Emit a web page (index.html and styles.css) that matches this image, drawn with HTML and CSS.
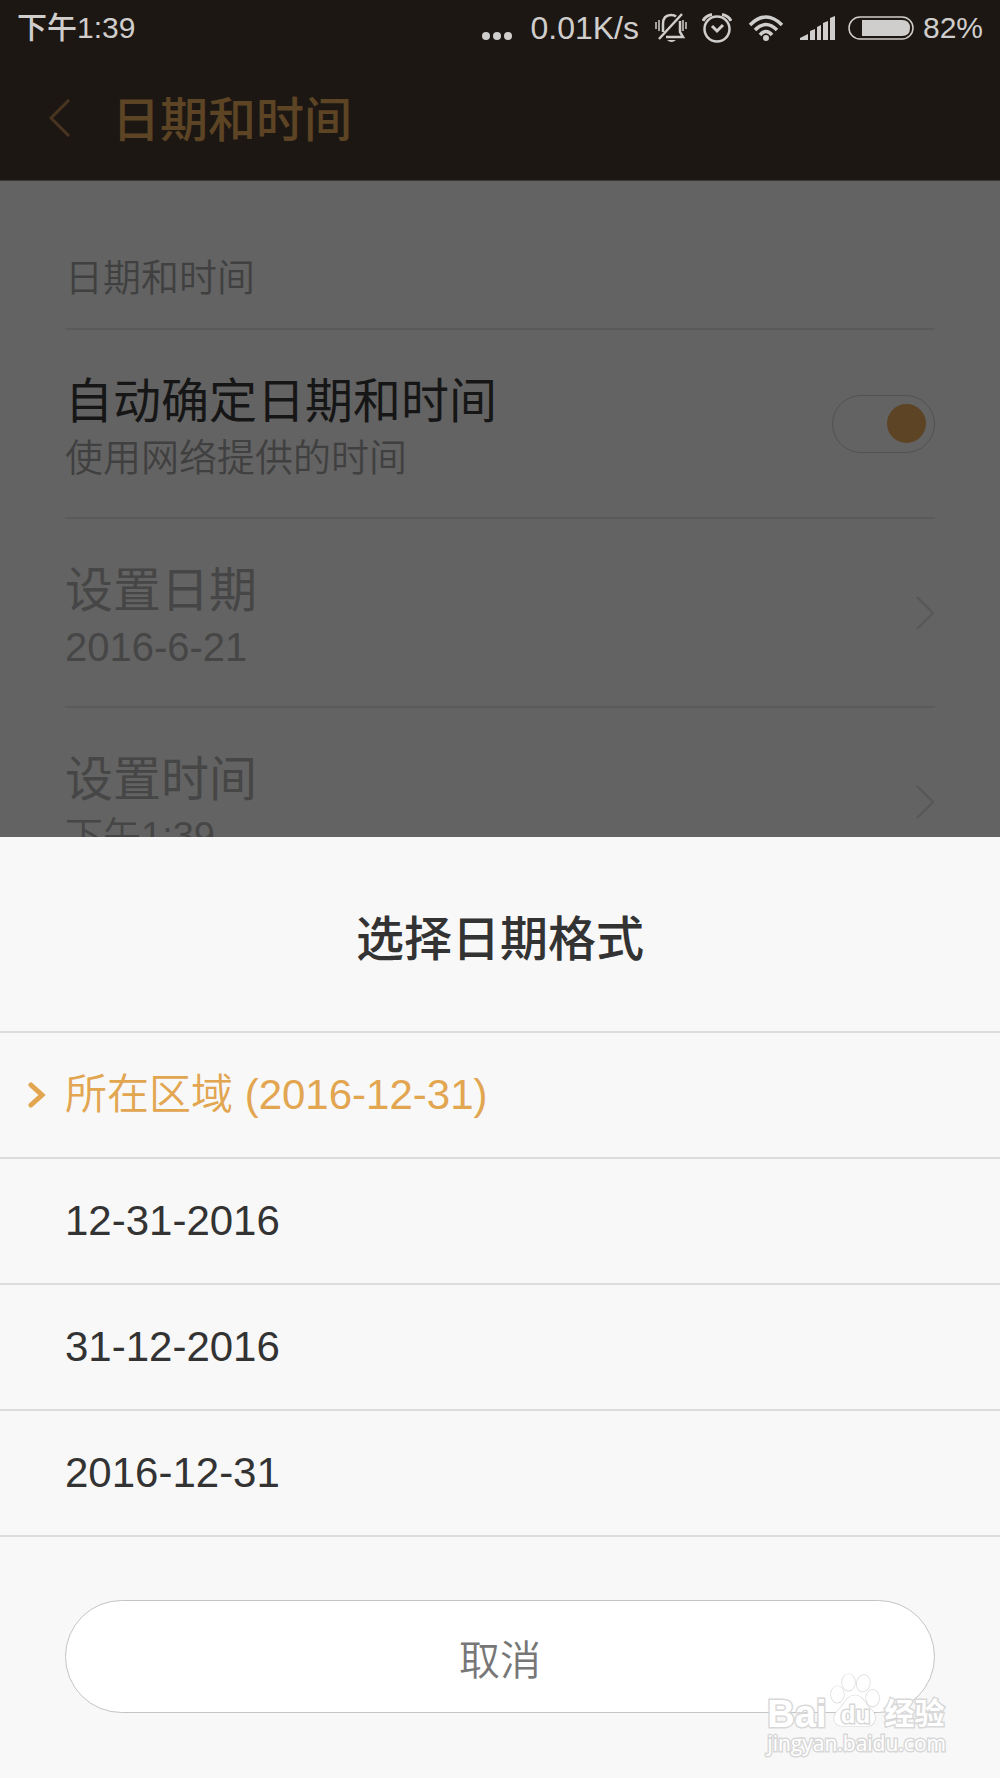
FILE: index.html
```html
<!DOCTYPE html>
<html lang="zh-CN">
<head>
  <meta charset="UTF-8">
  <meta name="viewport" content="width=device-width, initial-scale=1.0">
  <title>日期和时间</title>
  <link rel="stylesheet" href="styles.css">
</head>
<body>

  <header class="top">
    <div class="status-bar">
      <span class="clock">下午1:39</span>
      <svg class="dots" width="30" height="26" viewBox="0 0 30 26"><g fill="#d0cecc"><circle cx="4" cy="21" r="4"/><circle cx="15" cy="21" r="4"/><circle cx="26" cy="21" r="4"/></g></svg>
      <span class="speed">0.01K/s</span>
      <svg class="bell" width="32" height="30" viewBox="0 0 32 30" fill="none" stroke="#d0cecc" stroke-width="2.500">
        <path d="M8 19V11C8 5 11 2 16 2C18 2 20 2.500 21 3.500M25 8V19L28 24H11M4 26L27 1"/>
        <path d="M1 9V16M4 7V18M28 7V18M31 9V16" stroke-width="1.500"/>
        <path d="M12 27H21Q16.500 31 12 27Z" fill="#d0cecc" stroke="none"/>
      </svg>
      <svg class="alarm" width="30" height="30" viewBox="0 0 30 30" fill="none" stroke="#d0cecc" stroke-width="2.500">
        <circle cx="15" cy="16" r="12.500"/>
        <path d="M10 13L15 18L21 12" stroke-width="3"/>
        <path d="M1 8Q3 3 10 1.500M20 1.500Q27 3 29 8" stroke-width="3"/>
      </svg>
      <svg class="wifi" width="36" height="28" viewBox="0 0 36 28" fill="none" stroke="#d0cecc" stroke-width="3.500">
        <path d="M2 11Q18 -5 34 11M7 16Q18 5 29 16M12 21Q18 14 24 21"/>
        <circle cx="18" cy="24" r="3" fill="#d0cecc" stroke="none"/>
      </svg>
      <svg class="signal" width="35" height="24" viewBox="0 0 35 24" fill="#d0cecc">
        <path d="M0 24V22L8 18V24ZM10 24V15L15 13V24ZM17 24V11L21 9V24ZM23 24V7L28 5V24ZM30 24V2L35 0V24Z"/>
      </svg>
      <svg class="battery" width="66" height="24" viewBox="0 0 66 24">
        <rect x="1" y="1" width="64" height="22" rx="11" fill="none" stroke="#d0cecc" stroke-width="1.500"/>
        <path d="M14 4H54Q62 4 62 12Q62 20 54 20H14Z" fill="#d0cecc"/>
      </svg>
      <span class="percent">82%</span>
    </div>
    <div class="title-bar">
      <a href="#" class="back" aria-label="返回">
        <svg width="22" height="38" viewBox="0 0 22 38" fill="none" stroke="#49341f" stroke-width="3"><path d="M20 1L2 19L20 37"/></svg>
      </a>
      <h1>日期和时间</h1>
    </div>
  </header>

  <main class="settings">
    <h2>日期和时间</h2>
    <div class="row">
      <label class="row-text" for="auto">
        <span class="name">自动确定日期和时间</span>
        <span class="value">使用网络提供的时间</span>
      </label>
      <input type="checkbox" id="auto" class="switch" checked>
    </div>
    <div class="row disabled">
      <div class="row-text">
        <span class="name">设置日期</span>
        <span class="value date">2016-6-21</span>
      </div>
      <svg width="19" height="34" viewBox="0 0 19 34" fill="none" stroke="#575757" stroke-width="2"><path d="M1 1L17 17L1 33"/></svg>
    </div>
    <div class="row disabled">
      <div class="row-text">
        <span class="name">设置时间</span>
        <span class="value">下午1:39</span>
      </div>
      <svg width="19" height="34" viewBox="0 0 19 34" fill="none" stroke="#575757" stroke-width="2"><path d="M1 1L17 17L1 33"/></svg>
    </div>
  </main>

  <form class="sheet" role="dialog" aria-labelledby="sheetTitle">
    <h2 id="sheetTitle">选择日期格式</h2>
    <label class="option">
      <input type="radio" name="formato" checked>
      <svg class="mark" width="18" height="26" viewBox="0 0 18 26" fill="none" stroke="#e2a550" stroke-width="5" stroke-linecap="round"><path d="M3 3L14 13L3 23"/></svg>
      <span>所在区域 (2016-12-31)</span>
    </label>
    <label class="option">
      <input type="radio" name="formato">
      <span>12-31-2016</span>
    </label>
    <label class="option">
      <input type="radio" name="formato">
      <span>31-12-2016</span>
    </label>
    <label class="option">
      <input type="radio" name="formato">
      <span>2016-12-31</span>
    </label>
    <button type="button" class="cancel">取消</button>

    <div class="watermark">
      <div class="brand">
        <span class="bai">Bai</span>
        <span class="paw">
          <svg width="50" height="58" viewBox="0 0 54 58" fill="#fff" stroke="#d8d8d8" stroke-width="1.500">
            <ellipse cx="8" cy="23" rx="7" ry="9"/>
            <ellipse cx="20" cy="10" rx="7" ry="9"/>
            <ellipse cx="36" cy="11" rx="7" ry="9" transform="rotate(12 36 11)"/>
            <ellipse cx="46" cy="27" rx="7" ry="9"/>
            <path d="M27 24C36 24 38 34 44 39C52 46 49 57 40 57H14C3 57 2 46 9 40C16 34 18 24 27 24Z"/>
          </svg>
          <span class="du">du</span>
        </span>
        <span class="jing">经验</span>
      </div>
      <div class="site">jingyan.baidu.com</div>
    </div>
  </form>

</body>
</html>
```
FILE: styles.css
```css
* {
  box-sizing: border-box;
}
body {
  margin: 0;
  height: 100vh;
  display: flex;
  flex-direction: column;
  background: #636363;
  font-family: "Liberation Sans", "Noto Sans CJK SC", sans-serif;
  font-weight: 350;
}
h1, h2 {
  margin: 0;
  font-size: 48px;
  line-height: 60px;
  font-weight: 500;
}

/* Barra superior */
.top {
  flex: none;
  height: 181px;
  background: #1d1713;
  border-bottom: 1px solid #3c3835;
}
.status-bar {
  display: flex;
  align-items: center;
  height: 56px;
  padding: 0 17px;
  color: #d0cecc;
  font-size: 30px;
  font-weight: 500;
  line-height: 34px;
}
.clock {
  margin-right: auto;
}
.speed {
  margin: 0 16px 0 18px;
  font-size: 32px;
}
.alarm {
  margin: 0 16px 0 15px;
}
.signal {
  margin: 0 13px 0 16px;
}
.percent {
  margin-left: 9px;
}
.title-bar {
  display: flex;
  align-items: center;
  gap: 41px;
  height: 124px;
  padding: 0 49px;
}
.title-bar h1 {
  padding-top: 6px;
  color: #5c4424;
}
.back {
  display: flex;
}

/* Lista de ajustes */
.settings {
  flex: 1 1 0;
  min-height: 0;
  overflow: hidden;
  padding: 0 65px;
  color: #404040;
}
.settings h2 {
  height: 147px;
  padding-top: 67px;
  font-size: 38px;
  font-weight: 350;
}
.row {
  display: flex;
  align-items: center;
  justify-content: space-between;
  height: 189px;
  border-top: 2px solid #5a5a5a;
}
.row-text {
  padding-top: 8px;
}
.row-text span {
  display: block;
}
.name {
  font-size: 48px;
  line-height: 60px;
  font-weight: 400;
  color: #161616;
}
.value {
  font-size: 38px;
  line-height: 52px;
}
.date {
  font-size: 40px;
}
.disabled {
  color: #464646;
}
.disabled .name {
  color: #464646;
}
.switch {
  appearance: none;
  display: flex;
  align-items: center;
  justify-content: flex-end;
  width: 103px;
  height: 58px;
  margin: 0;
  padding-right: 8px;
  border: 1px solid #525252;
  border-radius: 29px;
}
.switch::before {
  content: "";
  width: 39px;
  height: 39px;
  border-radius: 50%;
  background: #5c4424;
}

/* Panel inferior */
.sheet {
  position: relative;
  flex: none;
  padding-bottom: 65px;
  background: #f8f8f8;
  color: #333;
}
.sheet h2 {
  height: 196px;
  padding-top: 73px;
  text-align: center;
  border-bottom: 2px solid #dcdcdc;
}
.option {
  display: flex;
  align-items: center;
  height: 126px;
  padding-left: 65px;
  border-bottom: 2px solid #dcdcdc;
  font-size: 42px;
  line-height: 60px;
}
.option input {
  appearance: none;
  width: 0;
  margin: 0;
}
.option input:checked ~ span {
  color: #e2a550;
}
.mark {
  margin-left: -37px;
  margin-right: 19px;
}
.cancel {
  display: block;
  width: calc(100% - 130px);
  height: 113px;
  margin: 63px auto 0;
  border: 1px solid #c4c4c4;
  border-radius: 57px;
  background: #fff;
  color: #777;
  font: inherit;
  font-size: 41px;
}

/* Marca de agua */
.watermark {
  position: absolute;
  right: 54px;
  bottom: 21px;
  color: #fff;
  -webkit-text-stroke: 3px #d8d8d8;
  paint-order: stroke;
}
.brand {
  display: flex;
  align-items: flex-end;
  height: 58px;
  font-weight: 700;
}
.bai {
  font-size: 38px;
  line-height: 30px;
}
.paw {
  display: grid;
  margin: 0 4px;
}
.paw svg, .du {
  grid-area: 1 / 1;
}
.du {
  align-self: end;
  justify-self: center;
  font-size: 24px;
  line-height: 28px;
}
.jing {
  font-size: 30px;
  line-height: 30px;
}
.site {
  font-family: "Open Sans", sans-serif;
  font-size: 21px;
  font-weight: 400;
  line-height: 28px;
}
```
